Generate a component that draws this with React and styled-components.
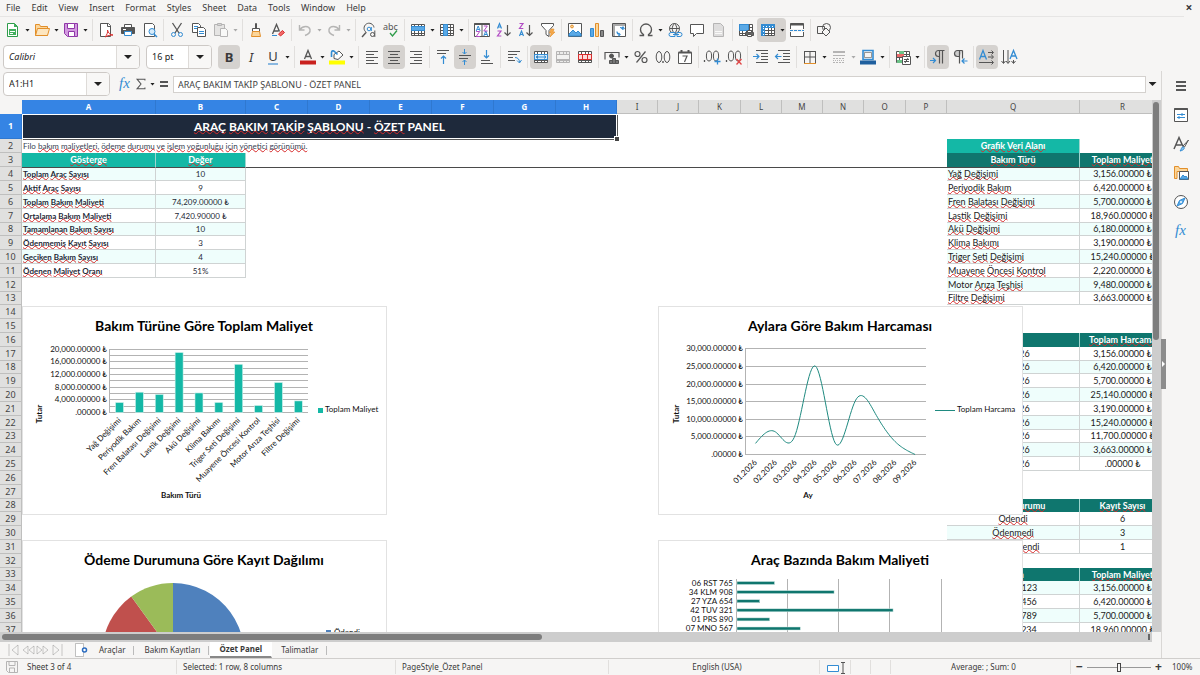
import React from "react";
import styled, { createGlobalStyle, css } from "styled-components";

const ink = "#555";
const blue = "#338cd3";
const teal = "#14b8a6";
const deepTeal = "#0f766e";

const GlobalStyle = createGlobalStyle`
  * { box-sizing: border-box; }
  body {
    margin: 0;
    background: #f6f5f4;
    color: #3a3a3a;
    font: 9px/14px "Noto Sans", sans-serif;
    overflow: hidden;
  }
  button, input { font: inherit; color: inherit; margin: 0; }
  button { border: 0; padding: 0; background: none; }
`;

/* ---------- icons ---------- */

const Svg = styled.svg`
  display: block;
  flex: none;
  width: ${(p) => p.$w || 16}px;
  height: 16px;
  overflow: visible;
  fill: none;
  stroke: ${ink};
  stroke-width: 1;
  opacity: ${(p) => (p.$dim ? 0.4 : 1)};
`;

const Lines = ({ rows, color }) => (
  <path stroke={color} d={rows.map(([x, y, w]) => `M${x} ${y}h${w}`).join("")} />
);
const Letter = ({ x, y, size = 8, fill = blue, weight = 400, children }) => (
  <text x={x} y={y} fontSize={size} fill={fill} stroke="none" fontWeight={weight} fontFamily="Noto Sans, sans-serif">
    {children}
  </text>
);
const gridPath = "M1.5 2.5h13v11h-13zM1.5 5.5h13M1.5 8.5h13M1.5 11.5h13M4.5 2.5v11M8.5 2.5v11M11.5 2.5v11";
const purple = "#b14bc4";
const strokeA = (x, y) => `M${x} ${y + 5}l2-5 2 5M${x + 1} ${y + 3.5}h2.200`;
const strokeZ = (x, y) => `M${x} ${y}h3.500L${x} ${y + 5}h3.800`;

const icons = {
  newDoc: <><path stroke="#2e9c4a" fill="#fff" d="M2.5 1.5h7l3 3v10h-10z" /><path stroke="none" fill="#3fae5b" d="M4 7h7v6H4zM9 1l4 4H9z" /><path stroke="#fff" d="M5 9.5h5M5 11.5h3" /></>,
  open: <><path stroke="#e28f2a" fill="#fbd69b" d="M1.5 13.5v-11h4l1 2h7v9z" /><path stroke="#e28f2a" fill="#fde6c0" d="M1.5 13.5l2-7h12l-2 7z" /></>,
  save: <><path stroke="#9038a8" fill="#d39ae0" d="M1.500 1.500h13v13h-10l-3-3z" /><path stroke="#9038a8" fill="#fff" d="M4.500 1.500h7v5h-7zM5.500 9.500h6v5h-6z" /></>,
  pdf: <><path fill="#fff" d="M2.500 1.500h8l2 2v11h-10z" /><path d="M9.500 1.500v3h3" /><path stroke="#d92d2d" d="M7 15c2-2 3-5 2.500-7 .5 3 3 5 5.500 5-3 0-5 .5-8 2z" /></>,
  print: <><path fill="#fff" d="M4.500 2.500h7v4h-7z" /><path fill="#555" d="M1.500 5.500h13v6h-13z" /><path fill="#fff" stroke={blue} d="M4.500 9.500h7v4h-7z" /><path stroke="#fff" d="M3 7.500h3" /></>,
  preview: <><path fill="#fff" d="M2.500 1.500h8l2 2v11h-10z" /><circle cx="10" cy="9.500" r="3" fill="#d7ebfa" stroke={blue} /><path stroke={blue} strokeWidth="1.500" d="M12 12l3 3" /></>,
  cut: <><path strokeWidth="1.300" d="M3.500 1l6.500 10M12.500 1L6 11" /><circle cx="4.500" cy="12.500" r="2" stroke={blue} /><circle cx="11.500" cy="12.500" r="2" stroke={blue} /></>,
  copy: <><path fill="#fff" d="M1.500 1.500h6l2 2v7h-8z" /><path stroke={blue} d="M3 4.500h4M3 6.500h3" /><path fill="#fff" d="M6.500 5.500h6l2 2v7h-8z" /><path stroke={blue} d="M8 9.500h5M8 11.500h5" /></>,
  paste: <><path fill="#ccc" d="M1.500 2.500h10v11h-10z" /><path fill="#aaa" d="M4.500 1.500h4v2h-4z" /><path fill="#fff" d="M7.500 6.500h5l2 2v6h-7z" /></>,
  brush: <><path fill="#ddd" d="M7.500 1.500h1v5h-1z" /><path d="M4.500 6.500h7v3h-7z" fill="#fff" /><path stroke="#e28f2a" fill="#fbd69b" d="M4.500 9.500h7l1 5h-9z" /></>,
  clear: <><path strokeWidth="1.300" d="M2.500 12L6.500 2.500l3 7M4 9h4.500" /><path stroke={blue} d="M2 13.500h5" /><path stroke="#d92d2d" fill="#f06a6a" d="M8.500 12l4-3.500 2 2-4 3.500z" /></>,
  undo: <path strokeWidth="1.400" d="M2.500 3v5h5M3 7.500c3-4 9-4 10 0 .5 3-2 5-5 6" />,
  redo: <path strokeWidth="1.400" d="M13.500 3v5h-5M13 7.500c-3-4-9-4-10 0-.5 3 2 5 5 6" />,
  find: <><path d="M5.500 10.500a5 5 0 117.500-5" /><path strokeWidth="1.400" d="M5 10.500l-4 4.500" /><circle cx="8" cy="7" r="1.800" stroke={blue} /><path stroke={blue} d="M10.300 5v4" /><circle cx="11.500" cy="12.500" r="2" /><path d="M13.800 8.500v6.500" /></>,
  spell: <><Letter x={0} y={8} size={9} fill={ink}>abc</Letter><path stroke="#2e9c4a" strokeWidth="1.300" d="M7 11l2.500 3L14 8.500" /></>,
  row: <><path fill="#fff" d={gridPath} /><path fill="#5aa9e6" stroke={blue} d="M1.500 4.500h13v4h-13z" /></>,
  column: <><path fill="#fff" d={gridPath} /><path fill="#5aa9e6" stroke={blue} d="M4.500 2.500h4v11h-4z" /></>,
  sort: <><path fill="#fff" d="M.5 1.500h15v13H.5zM8 1.500v13" /><path strokeWidth="2" d="M.5 2h15" /><path stroke={blue} d={strokeA(2.2, 4) + strokeA(9.8, 9)} /><path stroke={purple} d={strokeZ(2.2, 9.500) + strokeZ(9.8, 4)} /></>,
  sortAsc: <><path stroke={blue} strokeWidth="1.200" d={strokeA(1.500, 1.500)} /><path stroke={purple} strokeWidth="1.200" d={strokeZ(1.500, 9)} /><path strokeWidth="1.200" d="M11.500 3v10M8.500 10.500l3 3 3-3" /></>,
  sortDesc: <><path stroke={purple} strokeWidth="1.200" d={strokeZ(1.500, 1.500)} /><path stroke={blue} strokeWidth="1.200" d={strokeA(1.500, 9)} /><path strokeWidth="1.200" d="M11.500 3v10M8.500 10.500l3 3 3-3" /></>,
  filter: <><path fill="#fff" d="M1.500 1.500h12v2l-4.500 5v6l-3-2v-4l-4.500-5z" /><path fill="#f5a84a" stroke="#e28f2a" strokeWidth=".6" d="M11 7h3l-1 3h2l-5 5 1.200-4H9.500z" /></>,
  image: <><path fill="#fff" d="M1.500 1.500h13v13h-13z" /><path fill="#5aa9e6" stroke={blue} d="M2 14v-2l4-4 3 3 2-2 3 3v2z" /><circle cx="5" cy="4.500" r="1.400" stroke="#e28f2a" fill="#fbd69b" /></>,
  chart: <><path fill="#5aa9e6" stroke={blue} d="M1.500 6.500h3v8h-3z" /><path fill="#fbd69b" stroke="#e28f2a" d="M6.500 1.500h3v13h-3z" /><path fill="#888" d="M11.500 8.500h3v6h-3z" /></>,
  pivot: <><path fill="#fff" d="M1.500 1.500h13v13h-13z" /><path strokeWidth="2" stroke="#aaa" d="M2 3h12M3 3v11" /><path stroke={blue} strokeWidth="1.200" d="M6 9.500c0 2 1 3 3 3M7.500 11l1.500 1.500L7.500 14M12 8c0-2-1-2.500-3-2.500M10.500 7L12 5l1.500 2" /></>,
  omega: <path strokeWidth="1.300" d="M1.500 13.500h4v-1c-2-1-3-3-3-5a5.300 5.300 0 0111 0c0 2-1 4-3 5v1h4" />,
  link: <><circle cx="7.500" cy="6.500" r="5" /><path d="M2.500 6.500h10M7.500 1.500c-3 3-3 7 0 10M7.500 1.500c3 3 3 7 0 10" /><path stroke={blue} fill="#f6f5f4" d="M4 10.500h4v4H4a2 2 0 010-4zM10 10.500h3a2 2 0 010 4h-3z" /><path stroke={blue} d="M6 12.500h6" /></>,
  comment: <path fill="#fff" d="M1.500 2.500h13v9h-7l-3 3v-3h-3z" />,
  page: <><path fill="#bbb" d="M2.500 1.500h7l3 3v10h-10z" /><path stroke="#fff" d="M4 9.500h7M4 11.500h7" /></>,
  printArea: <><path fill="#fff" d={gridPath} /><path fill="#5aa9e6" stroke={blue} d="M1.500 2.500h9v6h-9z" /><path fill="#666" d="M7.500 10.500h8v3h-8z" /><path fill="#fff" d="M9.500 8.500h4v2h-4zM9.500 12.500h4v2h-4z" /></>,
  freeze: <><path fill="#fff" d={gridPath} /><path fill={blue} stroke={blue} d="M1.500 2.500h13v3h-13zM1.500 2.500h3v11h-3z" /><path stroke="#fff" strokeDasharray="1 2" d="M3 4.500h11M3.500 6v8" /></>,
  split: <><path fill="#fff" d="M1.500 1.500h13v13h-13z" /><path strokeWidth="2" d="M1.500 2.500h13" /><path stroke="#f6f5f4" strokeWidth="3" d="M0 8.500h16" /><path stroke={blue} strokeDasharray="3 1" d="M1 8.500h14" /></>,
  shapes: <><path d="M1.500 4.500h7v7h-7z" /><circle cx="10.500" cy="5.500" r="4" /><path fill="#f6f5f4" d="M10 6l4 4-4 4-4-4z" /></>,
  fontColor: <><path strokeWidth="1.300" d="M4.500 10L8 1.500 11.500 10M5.500 7.500h5" /><path stroke="#c9211e" strokeWidth="4" d="M0 13.500h16" /></>,
  fill: <><path fill="#fff" d="M5 5.500l5-3.500 4 4-5 4.500-4-1z" /><path stroke={blue} strokeWidth="1.600" d="M2.500 8V3.500c0-2 2-2 3-1l3 3" /><path stroke="#ffff00" strokeWidth="4" d="M0 13.500h16" /></>,
  alignLeft: <Lines rows={[[2, 2.5, 12], [2, 5.5, 8], [2, 8.5, 12], [2, 11.5, 8], [2, 14.5, 12]]} />,
  alignCenter: <Lines rows={[[2, 2.5, 12], [4, 5.5, 8], [2, 8.5, 12], [4, 11.5, 8], [2, 14.5, 12]]} />,
  alignRight: <Lines rows={[[2, 2.5, 12], [6, 5.5, 8], [2, 8.5, 12], [6, 11.5, 8], [2, 14.5, 12]]} />,
  alignTop: <><Lines rows={[[2, 1.5, 12], [2, 4.5, 9]]} /><path stroke={blue} strokeWidth="1.200" d="M8.500 15V7M6 9.500L8.500 7 11 9.500" /></>,
  alignMiddle: <><Lines rows={[[2, 6.500, 12], [2, 9.500, 9]]} /><path stroke={blue} d="M7.500 0v5M5.500 3l2 2 2-2M7.500 16v-5M5.500 13l2-2 2 2" /></>,
  alignBottom: <><Lines rows={[[2, 11.5, 9], [2, 14.5, 12]]} /><path stroke={blue} strokeWidth="1.200" d="M7.500 1v8M5 6.500L7.500 9 10 6.500" /></>,
  wrap: <><Lines rows={[[2, 2.5, 12], [2, 5.5, 9], [2, 8.5, 5], [2, 11.5, 7]]} /><path stroke={blue} d="M9 8.500c3 0 4.500 2 4.500 5M11 11.500l2.500 2.500 2-3" /></>,
  merge: <><path fill="#fff" d={gridPath} /><path fill="#d7ebfa" stroke={blue} d="M1.500 5.500h13v5h-13zM3 8h10M5 6.500L3 8l2 1.500M11 6.500L13 8l-2 1.500" /></>,
  mergeOff: <><path fill="#ddd" d={gridPath} /><path fill="#eee" d="M1.500 5.500h13v5h-13z" /></>,
  unmerge: <><path fill="#fff" d={gridPath} /><path fill="#fbdcdc" stroke="#d92d2d" d="M1.500 5.500h13v5h-13zM5.500 5.500v5M10.500 5.500v5" /></>,
  currency: <><path d="M1 10.500v-7h14v5" strokeWidth="1.200" /><circle cx="7.500" cy="7" r="2" fill={ink} /><path fill="#777" d="M5.500 11.500h3v3h-3zM8.500 9.500h3v5h-3zM11.500 11.500h3v3h-3z" /></>,
  percent: <><circle cx="4.500" cy="5" r="2.500" strokeWidth="1.200" /><circle cx="11.500" cy="11" r="2.500" strokeWidth="1.200" /><path strokeWidth="1.200" d="M12.500 2.500l-9 11" /></>,
  number: <><ellipse cx="4" cy="8" rx="2.800" ry="5.500" /><ellipse cx="12" cy="8" rx="2.800" ry="5.500" /><path d="M8 12v2" strokeWidth="1.400" /></>,
  date: <><path fill="#fff" d="M1.500 3.500h13v11h-13z" /><path strokeWidth="2" d="M1.500 3.500h13M4.500 1v3M11.500 1v3" /><path strokeWidth="1.200" d="M5.500 7h4.500l-2.500 6" /></>,
  addDec: <><path d="M.5 11v2" strokeWidth="1.300" /><ellipse cx="5" cy="7" rx="2.600" ry="5" /><ellipse cx="12" cy="7" rx="2.600" ry="5" /><path stroke={blue} strokeWidth="1.300" d="M13.500 9.500v6M10.500 12.500h6" /></>,
  delDec: <><path d="M.5 11v2" strokeWidth="1.300" /><ellipse cx="5" cy="7" rx="2.600" ry="5" /><ellipse cx="12" cy="7" rx="2.600" ry="5" /><path stroke="#e04646" strokeWidth="1.300" d="M10.500 10l5 5.500M15.500 10l-5 5.500" /></>,
  indent: <><Lines rows={[[3, 1.5, 12], [8, 4.5, 7], [8, 7.5, 7], [8, 10.5, 7], [3, 13.5, 12]]} /><path stroke={blue} strokeWidth="1.200" d="M0 7.500h6M3.500 5L6 7.500 3.500 10" /></>,
  outdent: <><Lines rows={[[3, 1.5, 12], [8, 4.5, 7], [8, 7.5, 7], [8, 10.5, 7], [3, 13.5, 12]]} /><path stroke={blue} strokeWidth="1.200" d="M6.500 7.500H.5M3 5L.5 7.500 3 10" /></>,
  borders: <><path fill="#fff" d="M2 2.500h12M2.500 2v12M13.500 2v12M8 2v12M2 8h12" /><path stroke="#e28f2a" d="M2 14.500h12" /></>,
  lineStyle: <><Lines rows={[[2, 2.5, 12], [2, 3.5, 12], [2, 6.5, 12]]} /><path strokeDasharray="2 1" d="M2 9.500h12M2 13.500h12" /><path strokeDasharray="1 1" d="M2 11.500h12" /></>,
  lineColor: <><path fill="#f6f5f4" stroke={blue} strokeWidth="1.600" d="M3 1.500h10v9H3z" /><path strokeWidth=".6" d="M4.500 3.500h7v5h-7z" /><path stroke="#1f5f9e" strokeWidth="4" d="M0 13.500h16" /></>,
  conditional: <><path fill="#fff" d={gridPath} /><path fill="#6cc287" stroke="none" d="M4 2h5v3H4z" /><path fill="#ea6a6a" stroke="none" d="M2 5h7v3H2z" /><path fill="#6cc287" stroke="none" d="M2 11h5v3H2z" /><path fill="#fff" d="M7.500 7.500h8v8h-8z" /><path d="M9 10.500h5M9 12.500h5M13 9l-3 5" /></>,
  ltr: <><path strokeWidth="1.200" d="M14.500 1.500h-6a3 3 0 000 6h1M9.500 1.500v13M12.500 1.500v13" /><path stroke={blue} strokeWidth="1.200" d="M0 11.500h5.500M3 9l2.500 2.500L3 14" /></>,
  rtl: <><path strokeWidth="1.200" fill="#ccc" d="M10.500 1.500h-5a3 3 0 000 6h2" /><path strokeWidth="1.200" d="M7.500 1.500v13M10.500 1.500v8" /><path stroke={blue} strokeWidth="1.200" d="M15.500 12H10M12.500 9.500L10 12l2.500 2.500" /></>,
  textH: <><path stroke={blue} strokeWidth="1.300" d="M.5 10.500L4 1.500l3.500 9M2 7.500h4" /><path d="M9 3.500h5M9 8h5M0 13.500h14M12.500 1.500l2 2-2 2M12.500 6l2 2-2 2M12.500 11.500l2 2-2 2" /></>,
  textV: <><path stroke={blue} strokeWidth="1.300" d="M9 10l3.500-8.500L16 10M10.500 7h4" /><path d="M2.500 1v13M7 1v13M12.500 11v3M.5 12l2 2.500 2-2.500M5 12l2 2.500L9 12M10.500 12l2 2.500 2-2.500" /></>,
  fx: <text x="2" y="12" fontSize="15" fontStyle="italic" fontFamily="Liberation Serif, serif" fill={blue} stroke="none">fx</text>,
  sigma: <path strokeWidth="1.200" d="M12.500 4V2.500h-9L8 8l-4.500 5.500h9V12" />,
  equals: <path strokeWidth="2" d="M4 6h8M4 10h8" />,
  menu: <path strokeWidth="1.500" stroke="#222" d="M3 4h10M3 8h10M3 12h10" />,
  properties: <><path fill="#fff" d="M1.500 1.500h13v13h-13z" /><path strokeWidth="2" d="M1.500 2h13" /><path stroke={blue} d="M4 7.500h8M4 10.500h8M9 6v3M6 9v3" /></>,
  styles: <><path strokeWidth="1.500" d="M1 13L6 1.500l4 9M3 9h5.500" /><path fill="#fff" d="M15.500 4l-4 7-1.500-1 5.500-6z" /><path stroke={blue} fill="#8cc4ee" d="M10 11c2 0 2 3-3 4 1.500-1 1-4 3-4z" /></>,
  gallery: <><path stroke="#e28f2a" fill="#fbd69b" d="M1.500 13.500v-12h4l1 2h8v3H4v7z" /><path fill="#fff" d="M6.500 6.500h9v8h-9z" /><path stroke={blue} fill="#5aa9e6" d="M7 14l3-4 2 2 1-1 2 3z" /></>,
  navigator: <><circle cx="8" cy="8" r="6.500" fill="#fff" /><path stroke={blue} fill="#5aa9e6" d="M12 4l-2.500 5.500L4 12l2.500-5.500z" /><circle cx="8" cy="8" r="1" fill="#fff" stroke="none" /></>,
  disk: <><path d="M2.500 2.500h11v11h-9l-2-2z" /><path d="M5 2.500v4h6v-4M5.500 13v-4h5v4" /></>,
  addSheet: <><path fill="#fff" stroke="#999" d="M2.500 1.500h8v13h-8z" strokeWidth=".6" /><circle cx="11.500" cy="8" r="2" strokeWidth="1.500" stroke="#2a6cc0" fill="#fff" /></>,
};

const Icon = ({ name, dim, w }) => (
  <Svg viewBox="0 0 16 16" $dim={dim} $w={w} aria-hidden="true">{icons[name]}</Svg>
);

const Triangle = styled.span`
  display: block;
  width: ${(p) => (p.$large ? 8 : 5)}px;
  height: ${(p) => (p.$large ? 4 : 3)}px;
  background: ${(p) => (p.$dim ? "#aaa" : "#222")};
  clip-path: polygon(0 0, 100% 0, 50% 100%);
`;

/* ---------- bars ---------- */

const Shell = styled.div`
  height: 100vh;
  display: flex;
  flex-direction: column;
`;

const MenuBar = styled.nav`
  display: flex;
  align-items: center;
  height: 17px;
  margin-right: 16px;
  border-bottom: 1px solid #e6e5e4;
`;
const MenuItem = styled.button`
  padding: 0 5px 0 6px;
  line-height: 16px;
`;
const CloseButton = styled.button`
  position: absolute;
  top: 0;
  right: 6px;
  width: 10px;
  line-height: 16px;
  font-size: 12px;
  font-weight: 700;
`;

const Toolbar = styled.div`
  display: flex;
  align-items: center;
  flex: none;
  height: ${(p) => (p.$tall ? 28 : 26)}px;
  padding-left: ${(p) => (p.$tall ? 3 : 2)}px;
`;
const Tool = styled.button`
  display: grid;
  place-items: center;
  flex: none;
  width: 22px;
  height: 24px;
  border-radius: 4px;
  background: ${(p) => (p.$on ? "#d5d2cf" : "transparent")};
  ${(p) => p.$joined && css`border-radius: 4px 0 0 4px;`}
  font-size: 13px;
`;
const ToolArrow = styled.button`
  display: grid;
  place-items: center;
  flex: none;
  width: 7px;
  height: 24px;
  border-radius: 0 4px 4px 0;
  background: ${(p) => (p.$on ? "#d5d2cf" : "transparent")};
`;
const Separator = styled.span`
  flex: none;
  width: ${(p) => (p.$wide ? 6 : 5)}px;
  height: 22px;
  background: linear-gradient(#e1dfdd, #e1dfdd) center / 1px 100% no-repeat;
`;

const Combo = styled.div`
  display: flex;
  flex: none;
  width: ${(p) => p.$width}px;
  height: 24px;
  margin-right: ${(p) => p.$gap || 6}px;
  border: 1px solid #cdc9c6;
  border-radius: 4px;
  background: #fff;
  overflow: hidden;
`;
const ComboInput = styled.input`
  flex: 1;
  min-width: 0;
  padding: 0 5px;
  border: 0;
  background: none;
  font-style: ${(p) => (p.$italic ? "italic" : "normal")};
  color: #222;
`;
const ComboArrow = styled.button`
  display: grid;
  place-items: center;
  width: 23px;
  border-left: 1px solid #dedbd8;
  background: #f8f7f6;
`;
const Glyph = styled.span`
  font: ${(p) => (p.$bold ? "700" : "400")} 13px/18px "Noto Sans", sans-serif;
  font-style: ${(p) => (p.$italic ? "italic" : "normal")};
  border-bottom: ${(p) => (p.$under ? "2px solid #8ab8e0" : "0")};
  line-height: ${(p) => (p.$under ? 14 : 18)}px;
`;

const Body = styled.div`
  display: flex;
  flex: 1;
  min-height: 0;
`;
const Main = styled.main`
  display: flex;
  flex-direction: column;
  flex: 1;
  min-width: 0;
`;
const FormulaBar = styled.div`
  display: flex;
  align-items: center;
  flex: none;
  height: 29px;
  padding: 0 4px 3px 3px;
`;
const FormulaTool = styled.button`
  display: grid;
  place-items: center;
  width: 16px;
  height: 20px;
`;
const FormulaInput = styled.input`
  flex: 1;
  min-width: 0;
  height: 17px;
  margin: 0 2px 0 1px;
  padding: 0 4px;
  border: 1px solid #d4d1ce;
  background: #fff;
  color: #444;
`;
const ExpandButton = styled.button`
  display: grid;
  place-items: center;
  width: 9px;
  height: 16px;
`;

/* ---------- sheet ---------- */

const SheetArea = styled.div`
  display: flex;
  flex: 1;
  min-height: 0;
`;
const Viewport = styled.div`
  position: relative;
  flex: 1;
  min-width: 0;
  overflow: hidden;
  background: #fff;
`;
const Grid = styled.table`
  table-layout: fixed;
  width: 1px;
  border-spacing: 0;
  font: 9px/12px Lato, "Noto Sans", sans-serif;
  color: #1b1b1b;
`;
const Corner = styled.td`
  padding: 0;
  background: #f6f5f4;
`;
const Heading = styled.th`
  height: ${(p) => (p.$row ? "auto" : "14px")};
  padding: 0;
  overflow: hidden;
  font: ${(p) => (p.$on ? 700 : 400)} ${(p) => (p.$row ? 9 : 8)}px/12px "Noto Sans", sans-serif;
  text-align: center;
  vertical-align: middle;
  color: ${(p) => (p.$on ? "#fff" : "#444")};
  background: ${(p) => (p.$on ? "#3584e4" : "#e0e0df")};
  border: solid ${(p) => (p.$on ? "#2f78d0" : "#bfbfbe")};
  border-width: 0 1px ${(p) => (p.$on && !p.$row ? 0 : 1)}px 0;
`;
const Row = styled.tr`
  height: ${(p) => p.$height}px;
  & > td { ${(p) => p.$belowFreeze && css`border-top: 1px solid #4a4a4a;`} }
`;
const Cell = styled.td`
  position: relative;
  padding: 0 1px;
  line-height: 12px;
  white-space: nowrap;
  vertical-align: middle;
  text-align: ${(p) => (p.$left ? "left" : "center")};
  ${(p) => p.$boxed && css`
    overflow: hidden;
    border: solid #cfd3d3;
    border-width: 0 1px 1px 0;
    background: ${p.$tint ? "#effefc" : "#fff"};
  `}
  ${(p) => p.$head && css`
    overflow: hidden;
    color: #fff;
    font-weight: 700;
    background: ${p.$head};
    border-right: 1px solid #9fd6cf;
  `}
  ${(p) => p.$small && css`font-size: 8px; font-weight: ${p.$left ? 700 : 400}; color: #1f2937;`}
`;
const TitleCell = styled.td`
  position: relative;
  padding: 0;
  text-align: center;
  background: #1e293b;
  color: #fff;
  font-size: 12px;
  line-height: 20px;
  font-weight: 700;
  box-shadow: inset 0 0 0 1px #fff, 1px 1px 0 #555;
`;
const FillHandle = styled.span`
  position: absolute;
  right: -2px;
  bottom: -2px;
  width: 4px;
  height: 4px;
  background: #444;
  outline: 1px solid #fff;
`;
const Misspelt = styled.span`
  text-decoration: underline wavy #d62a2a 1px;
  text-decoration-skip-ink: none;
  text-underline-offset: -1px;
`;

const known = new Set(["Filo", "Motor", "-", "PANEL"]);
const Spell = ({ text }) =>
  text.split(" ").map((w, i) => (
    <React.Fragment key={i}>
      {i > 0 && " "}
      {known.has(w) || /\d/.test(w) ? w : <Misspelt>{w}</Misspelt>}
    </React.Fragment>
  ));

const columns = [
  ["A", 134], ["B", 90], ["C", 62], ["D", 62], ["E", 62], ["F", 62], ["G", 62], ["H", 61],
  ["I", 41], ["J", 41], ["K", 42], ["L", 41], ["M", 41], ["N", 41], ["O", 42], ["P", 41],
  ["Q", 133], ["R", 86], ["S", 62], ["T", 62], ["U", 62],
];

const summary = [
  ["Toplam Araç Sayısı", "10"], ["Aktif Araç Sayısı", "9"],
  ["Toplam Bakım Maliyeti", "74,209.00000 ₺"], ["Ortalama Bakım Maliyeti", "7,420.90000 ₺"],
  ["Tamamlanan Bakım Sayısı", "10"], ["Ödenmemiş Kayıt Sayısı", "3"],
  ["Geciken Bakım Sayısı", "4"], ["Ödenen Maliyet Oranı", "51%"],
];
const byType = [
  ["Yağ Değişimi", 3156], ["Periyodik Bakım", 6420], ["Fren Balatası Değişimi", 5700],
  ["Lastik Değişimi", 18960], ["Akü Değişimi", 6180], ["Klima Bakımı", 3190],
  ["Triger Seti Değişimi", 15240], ["Muayene Öncesi Kontrol", 2220],
  ["Motor Arıza Teşhisi", 9480], ["Filtre Değişimi", 3663],
];
const byMonth = [
  ["01.2026", 3156], ["02.2026", 6420], ["03.2026", 5700], ["04.2026", 25140], ["05.2026", 3190],
  ["06.2026", 15240], ["07.2026", 11700], ["08.2026", 3663], ["09.2026", 0],
];
const byStatus = [["Ödendi", 6], ["Ödenmedi", 3], ["Kısmi Ödendi", 1]];
const byVehicle = [["34 ABC 123", 3156], ["06 DEF 456", 6420], ["35 GHJ 789", 5700], ["16 XYZ 234", 18960]];

const money = (n) => `${n ? n.toLocaleString("en-US") : ""}.00000 ₺`;

const side = {};
const place = (start, head, rows, format, left) => {
  side[start] = { head };
  rows.forEach(([k, v], i) => { side[start + 1 + i] = { key: k, value: format(v), left }; });
};
place(3, ["Bakım Türü", "Toplam Maliyet"], byType, money, true);
place(16, ["Ay", "Toplam Harcama"], byMonth, money);
place(28, ["Ödeme Durumu", "Kayıt Sayısı"], byStatus, String);
place(33, ["Plaka", "Toplam Maliyet"], byVehicle, money);

const SideCells = ({ n }) => {
  const s = side[n];
  if (n === 2) return <><Cell $head={teal}><Spell text="Grafik Veri Alanı" /></Cell><Cell colSpan={4} /></>;
  if (!s) return <Cell colSpan={5} />;
  if (s.head)
    return <>{s.head.map((t) => <Cell key={t} $head={deepTeal}><Spell text={t} /></Cell>)}<Cell colSpan={3} /></>;
  return (
    <>
      <Cell $boxed $tint={n % 2 === 0} $left={s.left}><Spell text={s.key} /></Cell>
      <Cell $boxed $tint={n % 2 === 0}>{s.value}</Cell>
      <Cell colSpan={3} />
    </>
  );
};

const Note = styled.span`
  font-size: 8px;
  color: #374151;
`;

const LeftCells = ({ n }) => {
  if (n === 2)
    return (
      <Cell colSpan={16} $left>
        <Note><Spell text="Filo bakım maliyetleri, ödeme durumu ve işlem yoğunluğu için yönetici görünümü." /></Note>
      </Cell>
    );
  if (n === 3)
    return <><Cell $head={teal}><Spell text="Gösterge" /></Cell><Cell $head={teal}><Spell text="Değer" /></Cell><Cell colSpan={14} /></>;
  const s = summary[n - 4];
  if (!s) return <Cell colSpan={16} />;
  return (
    <>
      <Cell $boxed $small $left $tint={n % 2 === 0}><Spell text={s[0]} /></Cell>
      <Cell $boxed $small $tint={n % 2 === 0}>{s[1]}</Cell>
      <Cell colSpan={14} />
    </>
  );
};

const rowNumbers = Array.from({ length: 60 }, (_, i) => i + 2);

const SheetGrid = () => (
  <Grid>
    <colgroup>
      <col style={{ width: 22 }} />
      {columns.map(([c, w]) => <col key={c} style={{ width: w }} />)}
    </colgroup>
    <thead>
      <tr>
        <Corner />
        {columns.map(([c], i) => <Heading key={c} scope="col" $on={i < 8}>{c}</Heading>)}
      </tr>
    </thead>
    <tbody>
      <Row $height={25}>
        <Heading scope="row" $row $on>1</Heading>
        <TitleCell colSpan={8}>
          <Spell text="ARAÇ BAKIM TAKİP ŞABLONU - ÖZET PANEL" />
          <FillHandle />
        </TitleCell>
        <Cell colSpan={13} />
      </Row>
      {rowNumbers.map((n) => (
        <Row key={n} $height={n > 3 && n % 5 === 3 ? 13 : 14} $belowFreeze={n === 4}>
          <Heading scope="row" $row>{n}</Heading>
          <LeftCells n={n} />
          <SideCells n={n} />
        </Row>
      ))}
    </tbody>
  </Grid>
);

/* ---------- charts ---------- */

const ChartFrame = styled.figure`
  position: absolute;
  left: ${(p) => p.$x}px;
  top: ${(p) => p.$y}px;
  width: 365px;
  height: 209px;
  margin: 0;
  border: 1px solid #e2e2e2;
  background: #fff;
`;
const ChartSvg = styled.svg`
  display: block;
  width: 363px;
  height: 207px;
  font-family: Lato, "Noto Sans", sans-serif;
  font-size: 8px;
  fill: #111;
`;
const ChartTitle = styled.text`
  font-size: 14px;
  font-weight: 700;
  text-anchor: middle;
  fill: #000;
`;
const AxisTitle = styled.text`
  font-weight: 700;
  text-anchor: middle;
`;
const Tick = styled.text`
  text-anchor: end;
`;

const ColumnChart = () => (
  <ChartSvg viewBox="23 307 363 207">
    <ChartTitle x="204" y="331">Bakım Türüne Göre Toplam Maliyet</ChartTitle>
    {Array.from({ length: 11 }, (_, i) => {
      const y = Math.round(412 - i * 6.33) + 0.5;
      return (
        <g key={i}>
          <path stroke="#b3b3b3" d={`M109 ${y}H308`} />
          {i % 2 === 0 && <Tick x="107" y={y + 2}>{money(i * 2000)}</Tick>}
        </g>
      );
    })}
    <path stroke="#b3b3b3" d="M109.500 349v64" />
    {byType.map(([k, v], i) => {
      const x = 119.5 + i * 19.87;
      const h = (v / 20000) * 63.3;
      return (
        <g key={k}>
          <rect x={x - 4} y={412.5 - h} width="8" height={h} fill={teal} stroke="#d5f2ee" strokeWidth=".6" />
          <Tick transform={`translate(${x + 2} 421) rotate(-45)`}>{k}</Tick>
        </g>
      );
    })}
    <rect x="318" y="408" width="5" height="5" fill={teal} />
    <text x="325" y="412">Toplam Maliyet</text>
    <AxisTitle transform="translate(42 414) rotate(-90)">Tutar</AxisTitle>
    <AxisTitle x="181" y="498">Bakım Türü</AxisTitle>
  </ChartSvg>
);

/* Natural cubic spline through equally spaced points, sampled as a polyline. */
const splinePath = (xs, ys) => {
  const n = ys.length;
  const c = Array(n).fill(0);
  const d = Array(n).fill(0);
  const m = Array(n).fill(0);
  for (let i = 1; i < n - 1; i++) {
    const r = 6 * (ys[i + 1] - 2 * ys[i] + ys[i - 1]);
    const k = 4 - c[i - 1];
    c[i] = 1 / k;
    d[i] = (r - d[i - 1]) / k;
  }
  for (let i = n - 2; i > 0; i--) m[i] = d[i] - c[i] * m[i + 1];
  const pts = [];
  for (let i = 0; i < n - 1; i++)
    for (let s = 0; s <= 16; s++) {
      const t = s / 16;
      const u = 1 - t;
      const y = u * ys[i] + t * ys[i + 1] + ((u * u * u - u) * m[i] + (t * t * t - t) * m[i + 1]) / 6;
      pts.push(`${(xs[i] + t * (xs[i + 1] - xs[i])).toFixed(2)} ${y.toFixed(2)}`);
    }
  return `M${pts.join("L")}`;
};

const LineChart = () => {
  const xs = byMonth.map((_, i) => 755.5 + i * 19.95);
  const ys = byMonth.map(([, v]) => 454.5 - (v / 30000) * 105.5);
  return (
    <ChartSvg viewBox="659 307 363 207">
      <ChartTitle x="840" y="331">Aylara Göre Bakım Harcaması</ChartTitle>
      {Array.from({ length: 7 }, (_, i) => {
        const y = Math.round(454 - i * 17.6) + 0.5;
        return (
          <g key={i}>
            <path stroke="#b3b3b3" d={`M745 ${y}H926`} />
            <Tick x="743" y={y + 2}>{money(i * 5000)}</Tick>
          </g>
        );
      })}
      <path stroke="#b3b3b3" d="M745.500 349v106" />
      <path fill="none" stroke="#1f8a80" d={splinePath(xs, ys)} />
      {byMonth.map(([k], i) => (
        <Tick key={k} transform={`translate(${xs[i] + 2} 463) rotate(-45)`}>{k}</Tick>
      ))}
      <path stroke="#1f8a80" d="M935 410.500h20" />
      <text x="957" y="412">Toplam Harcama</text>
      <AxisTitle transform="translate(679 414) rotate(-90)">Tutar</AxisTitle>
      <AxisTitle x="808" y="498">Ay</AxisTitle>
    </ChartSvg>
  );
};

const pieColors = ["#4f81bd", "#c0504d", "#9bbb59"];
const PieChart = () => {
  const r = 71;
  const [cx, cy] = [173, 654];
  let from = 0;
  return (
    <ChartSvg viewBox="23 541 363 207">
      <ChartTitle x="204" y="565">Ödeme Durumuna Göre Kayıt Dağılımı</ChartTitle>
      {byStatus.map(([k, v], i) => {
        const a = from * Math.PI * 0.2;
        from += v;
        const b = from * Math.PI * 0.2;
        const p = (t) => `${cx + r * Math.sin(t)} ${cy - r * Math.cos(t)}`;
        return (
          <g key={k}>
            <path fill={pieColors[i]} d={`M${cx} ${cy}L${p(a)}A${r} ${r} 0 ${v > 5 ? 1 : 0} 1 ${p(b)}z`} />
            <rect x="326" y={630 + i * 14} width="5" height="5" fill={pieColors[i]} />
            <text x="334" y={635 + i * 14}>{k}</text>
          </g>
        );
      })}
    </ChartSvg>
  );
};

const vehicles = [
  ["06 RST 765", 3663], ["34 KLM 908", 9480], ["27 YZA 654", 2220],
  ["42 TUV 321", 15240], ["01 PRS 890", 3190], ["07 MNO 567", 6180],
];
const BarChart = () => (
  <ChartSvg viewBox="659 541 363 207">
    <ChartTitle x="840" y="565">Araç Bazında Bakım Maliyeti</ChartTitle>
    {[736.5, 787.5, 838.5, 889.5, 941.5].map((x) => <path key={x} stroke="#b3b3b3" d={`M${x} 579v120`} />)}
    {vehicles.map(([k, v], i) => (
      <g key={k}>
        <rect x="737" y={581.5 + i * 9.1} width={(v / 5000) * 51.2} height="3" fill={deepTeal} stroke="#cfe6e3" strokeWidth=".5" />
        <Tick x="733" y={585.5 + i * 9.1}>{k}</Tick>
      </g>
    ))}
  </ChartSvg>
);

/* ---------- scroll bars, side bar, tabs, status ---------- */

const VScroll = styled.div`
  flex: none;
  width: 9px;
  padding: 2px 2px 2px 1px;
  background: #cdcdcd;
`;
const VThumb = styled.div`
  height: 45%;
  border-radius: 3px;
  background: #7d7d7d;
`;
const HScroll = styled.div`
  display: flex;
  justify-content: space-between;
  flex: none;
  height: 10px;
  margin-right: 9px;
  padding: 2px;
  background: #cdcdcd;
`;
const HThumb = styled.div`
  width: 47%;
  border-radius: 3px;
  background: #7d7d7d;
`;
const HEnd = styled.div`
  width: 2px;
  background: #666;
`;

const SideBar = styled.aside`
  position: relative;
  display: flex;
  flex-direction: column;
  align-items: center;
  gap: 5px;
  flex: none;
  width: 39px;
  padding-top: 3px;
  border-left: 1px solid #d9d7d5;
`;
const SideTool = styled.button`
  display: grid;
  place-items: center;
  width: 24px;
  height: 24px;
`;
const SideHandle = styled.button`
  position: absolute;
  left: -1px;
  top: 268px;
  display: grid;
  place-items: center;
  width: 5px;
  height: 50px;
  background: #8c8c8c;
`;
const HandleArrow = styled.span`
  width: 3px;
  height: 6px;
  background: #fff;
  clip-path: polygon(0 0, 100% 50%, 0 100%);
`;

const TabBar = styled.div`
  display: flex;
  align-items: stretch;
  flex: none;
  height: 16px;
  padding-left: 5px;
  font-size: 8px;
`;
const TabNav = styled.button`
  width: 15px;
  svg { opacity: .3; }
`;
const AddSheet = styled.button`
  width: 16px;
  margin: 0 1px 0 8px;
`;
const Tab = styled.button`
  padding: 0 9px;
  border-right: 1px solid transparent;
  ${(p) => p.$on
    ? css`background: #fff; font-weight: 700; border-bottom: 2px solid #888;`
    : css`background: linear-gradient(#bbb, #bbb) right center / 1px 9px no-repeat;`}
`;

const StatusBar = styled.footer`
  display: grid;
  grid-template-columns: 20px 153px 219px 213px 211px 31px 20px 20px 1fr 95px 34px;
  align-items: center;
  flex: none;
  height: 17px;
  padding-left: 4px;
  border-top: 1px solid #d0cecc;
  font-size: 8px;
  line-height: 16px;
`;
const StatusItem = styled.span`
  height: 14px;
  line-height: 14px;
  padding-left: ${(p) => (p.$lead ? 3 : 6)}px;
  text-align: ${(p) => (p.$center ? "center" : "left")};
  border-right: 1px solid ${(p) => (p.$plain ? "transparent" : "#e1dfdd")};
`;
const Zoom = styled.div`
  display: flex;
  align-items: center;
  gap: 3px;
  padding-left: 4px;
`;
const ZoomStep = styled.button`
  width: 9px;
  font-size: 12px;
  line-height: 12px;
  font-weight: 700;
`;
const ZoomRange = styled.input`
  appearance: none;
  width: 64px;
  height: 10px;
  background: linear-gradient(#999, #999) center / 100% 1px no-repeat;
  &::-webkit-slider-thumb {
    appearance: none;
    width: 4px;
    height: 9px;
    border: 1px solid #444;
    background: #f6f5f4;
  }
`;

/* ---------- toolbar data: name, then "v" for an arrow, "on", "dim" ---------- */

const standard = [
  ["newDoc v", "open v", "save v"], ["pdf", "print", "preview"], ["cut", "copy", "paste v dim"],
  ["brush", "clear"], ["undo v dim", "redo v dim"], ["find", "spell"], ["row v", "column v"],
  ["sort", "sortAsc", "sortDesc", "filter"], ["image", "chart", "pivot"],
  ["omega v", "link", "comment", "page dim"], ["printArea", "freeze v on", "split"], ["shapes"],
];
const formatting = [
  ["bold on", "italic", "underline v"], ["fontColor v", "fill v"], ["alignLeft", "alignCenter on", "alignRight"],
  ["alignTop", "alignMiddle on", "alignBottom"], ["wrap"], ["merge on", "mergeOff dim", "unmerge"],
  ["currency v", "percent", "number", "date"], ["addDec", "delDec"], ["indent", "outdent"],
  ["borders v", "lineStyle v dim", "lineColor v"], ["conditional v"], ["ltr on", "rtl"], ["textH on", "textV"],
];
const glyphs = {
  bold: <Glyph $bold>B</Glyph>,
  italic: <Glyph $italic>I</Glyph>,
  underline: <Glyph $under>U</Glyph>,
};

const ToolGroups = ({ groups }) =>
  groups.map((group, g) => (
    <React.Fragment key={g}>
      {g > 0 && <Separator $wide={groups[g - 1].at(-1).includes(" v")} />}
      {group.map((entry) => {
        const [name, ...flags] = entry.split(" ");
        const on = flags.includes("on");
        const dim = flags.includes("dim");
        const arrow = flags.includes("v");
        return (
          <React.Fragment key={name}>
            <Tool $on={on} $joined={arrow} aria-label={name} aria-pressed={on}>
              {glyphs[name] || <Icon name={name} dim={dim} />}
            </Tool>
            {arrow && <ToolArrow $on={on} aria-label={`${name} options`}><Triangle $dim={dim} /></ToolArrow>}
          </React.Fragment>
        );
      })}
    </React.Fragment>
  ));

const ComboBox = ({ label, value, width, gap, italic }) => (
  <Combo $width={width} $gap={gap}>
    <ComboInput aria-label={label} defaultValue={value} $italic={italic} />
    <ComboArrow aria-label={`${label} list`}><Triangle $large /></ComboArrow>
  </Combo>
);

const navShapes = ["M4 2v12M13 3l-6 5 6 5z", "M8 4l-5 4 5 4zM14 4l-5 4 5 4z", "M2 4l5 4-5 4zM8 4l5 4-5 4z", "M3 3l6 5-6 5zM12 2v12"];

export default function App() {
  return (
    <Shell>
      <GlobalStyle />
      <MenuBar>
        {["File", "Edit", "View", "Insert", "Format", "Styles", "Sheet", "Data", "Tools", "Window", "Help"].map((m) => (
          <MenuItem key={m}>{m}</MenuItem>
        ))}
        <CloseButton aria-label="Close document">×</CloseButton>
      </MenuBar>
      <Toolbar><ToolGroups groups={standard} /></Toolbar>
      <Toolbar $tall>
        <ComboBox label="Font name" value="Calibri" width={137} italic />
        <ComboBox label="Font size" value="16 pt" width={66} />
        <ToolGroups groups={formatting} />
      </Toolbar>
      <Body>
        <Main>
          <FormulaBar>
            <ComboBox label="Name box" value="A1:H1" width={107} gap={7} />
            <FormulaTool aria-label="Function wizard"><Icon name="fx" /></FormulaTool>
            <FormulaTool aria-label="Select function"><Icon name="sigma" w={14} /></FormulaTool>
            <ToolArrow aria-label="Function list"><Triangle /></ToolArrow>
            <FormulaTool aria-label="Formula"><Icon name="equals" /></FormulaTool>
            <FormulaInput aria-label="Input line" defaultValue="ARAÇ BAKIM TAKİP ŞABLONU - ÖZET PANEL" />
            <ExpandButton aria-label="Expand formula bar"><Triangle $large /></ExpandButton>
          </FormulaBar>
          <SheetArea>
            <Viewport>
              <SheetGrid />
              <ChartFrame $x={22} $y={206}><ColumnChart /></ChartFrame>
              <ChartFrame $x={658} $y={206}><LineChart /></ChartFrame>
              <ChartFrame $x={22} $y={440}><PieChart /></ChartFrame>
              <ChartFrame $x={658} $y={440}><BarChart /></ChartFrame>
            </Viewport>
            <VScroll><VThumb /></VScroll>
          </SheetArea>
          <HScroll><HThumb /><HEnd /></HScroll>
          <TabBar>
            {navShapes.map((d, i) => (
              <TabNav key={i} aria-label={`Scroll tabs ${i + 1}`}><Svg viewBox="0 0 16 16"><path d={d} /></Svg></TabNav>
            ))}
            <AddSheet aria-label="Add sheet"><Icon name="addSheet" /></AddSheet>
            <Tab>Araçlar</Tab>
            <Tab>Bakım Kayıtları</Tab>
            <Tab $on>Özet Panel</Tab>
            <Tab>Talimatlar</Tab>
          </TabBar>
        </Main>
        <SideBar>
          {["menu", "properties", "styles", "gallery", "navigator", "fx"].map((n) => (
            <SideTool key={n} aria-label={n}><Icon name={n} /></SideTool>
          ))}
          <SideHandle aria-label="Hide sidebar"><HandleArrow /></SideHandle>
        </SideBar>
      </Body>
      <StatusBar>
        <Icon name="disk" dim />
        <StatusItem $lead>Sheet 3 of 4</StatusItem>
        <StatusItem>Selected: 1 row, 8 columns</StatusItem>
        <StatusItem>PageStyle_Özet Panel</StatusItem>
        <StatusItem $center>English (USA)</StatusItem>
        <StatusItem>
          <Svg viewBox="0 0 24 16" $w={24}>
            <path fill="#fff" stroke={blue} d="M1.500 5.500h11v6h-11z" />
            <path d="M15 2.500h4M15 13.500h4M17 3v10" />
          </Svg>
        </StatusItem>
        <StatusItem />
        <StatusItem />
        <StatusItem $center>Average: ; Sum: 0</StatusItem>
        <Zoom>
          <ZoomStep aria-label="Zoom out">−</ZoomStep>
          <ZoomRange type="range" aria-label="Zoom" defaultValue={50} />
          <ZoomStep aria-label="Zoom in">+</ZoomStep>
        </Zoom>
        <StatusItem $plain>100%</StatusItem>
      </StatusBar>
    </Shell>
  );
}
